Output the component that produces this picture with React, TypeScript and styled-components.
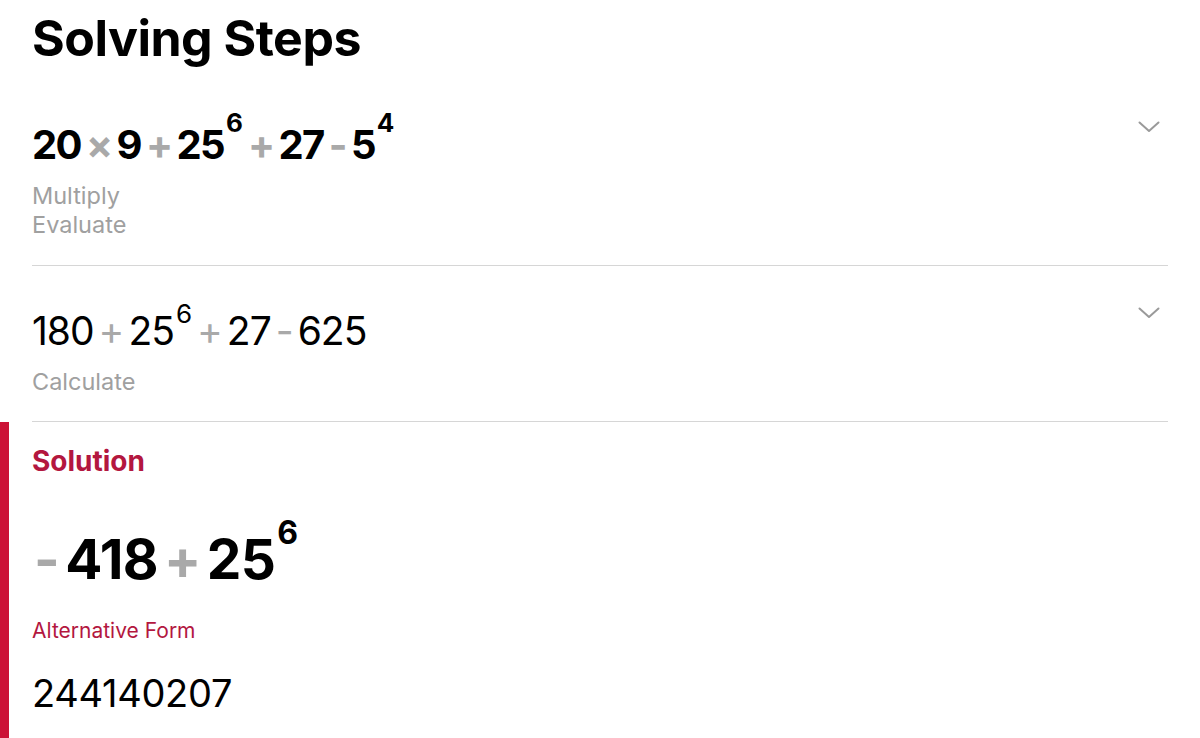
import React from "react";
import styled, { createGlobalStyle } from "styled-components";

const GlobalStyle = createGlobalStyle`
  html, body {
    margin: 0;
    padding: 0;
    background: #ffffff;
  }
  body {
    font-family: Inter, "Noto Sans", "Liberation Sans", sans-serif;
    color: #000;
    -webkit-font-smoothing: antialiased;
  }
`;

const Page = styled.div`
  width: 1200px;
  height: 738px;
  overflow: hidden;
  display: flex;
  flex-direction: column;
`;

const Title = styled.h1`
  margin: 8px 0 12px;
  padding: 0 32px;
  font-size: 50px;
  line-height: 60px;
  font-weight: 700;
  letter-spacing: -0.5px;
`;

const StepsList = styled.div`
  display: flex;
  flex-direction: column;
  padding: 0 32px;
`;

const Step = styled.div`
  display: flex;
  justify-content: space-between;
  align-items: flex-start;
  padding: 41px 0 26px;
  border-bottom: 1px solid #d6d6d6;
  &:last-child {
    padding-bottom: 25px;
  }
`;

const StepBody = styled.div`
  display: flex;
  flex-direction: column;
  gap: 12px;
`;

const MathLine = styled.div<{ $size: number; $weight: number; $lh: number; $track: number }>`
  font-size: ${(p) => p.$size}px;
  line-height: ${(p) => p.$lh}px;
  font-weight: ${(p) => p.$weight};
  white-space: nowrap;
  letter-spacing: ${(p) => p.$track}px;
`;

const Op = styled.span<{ $gap: number; $lead?: boolean }>`
  color: #a9a9a9;
  margin: 0 ${(p) => p.$gap}px 0 ${(p) => (p.$lead ? 2 : p.$gap)}px;
`;

const Sup = styled.span<{ $size: number; $raise: number }>`
  font-size: ${(p) => p.$size}px;
  line-height: 0;
  vertical-align: ${(p) => p.$raise}px;
  margin-left: 2px;
  letter-spacing: 0;
`;

const Labels = styled.div`
  display: flex;
  flex-direction: column;
  font-size: 23.5px;
  line-height: 29px;
  color: #a0a0a0;
`;

const Chevron = styled.svg`
  width: 22px;
  height: 12px;
  margin-right: 8px;
  flex-shrink: 0;
`;

const SolutionSection = styled.section`
  flex: 1;
  border-left: 9px solid #cc1236;
  padding: 22px 0 0 23px;
  display: flex;
  flex-direction: column;
`;

const SolutionTitle = styled.div`
  font-size: 28px;
  line-height: 34px;
  font-weight: 700;
  color: #b3173f;
`;

const AltTitle = styled.div`
  margin-top: 27px;
  font-size: 21px;
  line-height: 26px;
  color: #b3173f;
`;

const AltValue = styled.div`
  margin-top: 26px;
  font-size: 38px;
  line-height: 46px;
  letter-spacing: -0.3px;
`;

const AnswerWrap = styled.div`
  margin-top: 49px;
`;

const ChevronIcon = () => (
  <Chevron viewBox="0 0 22 12" fill="none">
    <path
      d="M1.5 1.5 L11 10 L20.5 1.5"
      stroke="#9a9a9a"
      strokeWidth="2"
      strokeLinecap="round"
      strokeLinejoin="round"
    />
  </Chevron>
);

export default function App() {
  return (
    <>
      <GlobalStyle />
      <Page>
        <Title>Solving Steps</Title>
        <StepsList>
          <Step>
            <StepBody>
              <MathLine $size={40} $weight={700} $lh={48} $track={-1.6}>
                20<Op $gap={5}>×</Op>9<Op $gap={5}>+</Op>25
                <Sup $size={26} $raise={27}>6</Sup>
                <Op $gap={5}>+</Op>27<Op $gap={5}>-</Op>5
                <Sup $size={26} $raise={27}>4</Sup>
              </MathLine>
              <Labels>
                <span>Multiply</span>
                <span>Evaluate</span>
              </Labels>
            </StepBody>
            <ChevronIcon />
          </Step>
          <Step>
            <StepBody>
              <MathLine $size={39} $weight={400} $lh={48} $track={-1}>
                180<Op $gap={5}>+</Op>25
                <Sup $size={26} $raise={22}>6</Sup>
                <Op $gap={5}>+</Op>27<Op $gap={5}>-</Op>625
              </MathLine>
              <Labels>
                <span>Calculate</span>
              </Labels>
            </StepBody>
            <ChevronIcon />
          </Step>
        </StepsList>
        <SolutionSection>
          <SolutionTitle>Solution</SolutionTitle>
          <AnswerWrap>
            <MathLine $size={55} $weight={700} $lh={64} $track={-0.6}>
              <Op $gap={6} $lead>-</Op>418<Op $gap={6}>+</Op>25
              <Sup $size={32} $raise={35}>6</Sup>
            </MathLine>
          </AnswerWrap>
          <AltTitle>Alternative Form</AltTitle>
          <AltValue>244140207</AltValue>
        </SolutionSection>
      </Page>
    </>
  );
}
